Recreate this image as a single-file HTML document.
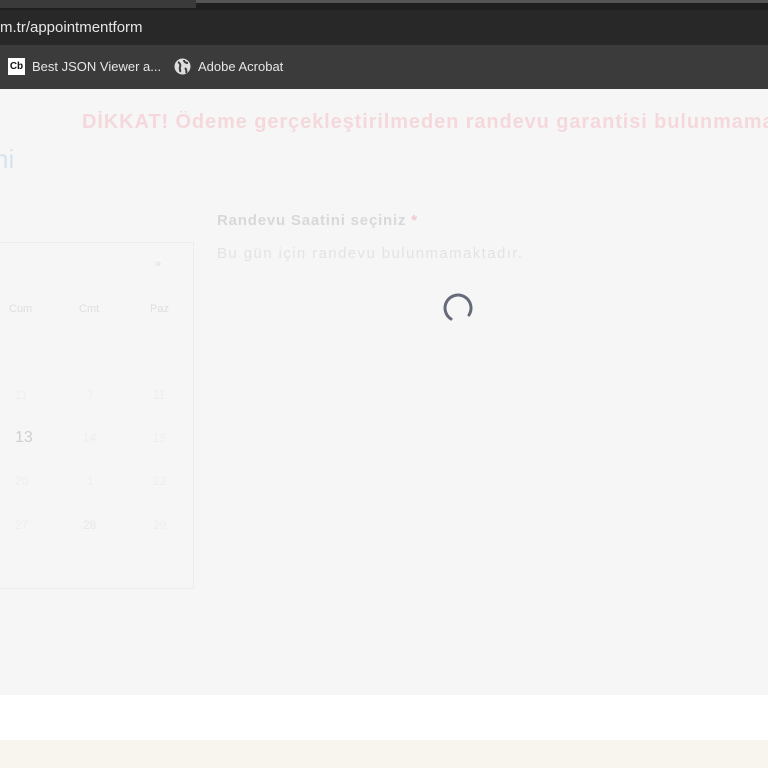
<!DOCTYPE html>
<html><head><meta charset="utf-8"><style>
body{margin:0;width:768px;height:768px;overflow:hidden;font-family:"Liberation Sans",sans-serif;background:#f6f6f6;position:relative}
div{position:absolute;box-sizing:border-box}
.t{white-space:nowrap}
</style></head><body>
<div style="left:0;top:0;width:768px;height:10px;background:#1f1f1f"></div>
<div style="left:0;top:0;width:196px;height:8px;background:#3a3a3a"></div>
<div style="left:196px;top:0;width:572px;height:3px;background:#555"></div>
<div style="left:0;top:10px;width:768px;height:35px;background:#282828"></div>
<div class="t" style="left:0;top:19px;font-size:15px;color:#e6e6e6">m.tr/appointmentform</div>
<div style="left:0;top:45px;width:768px;height:44px;background:#3b3b3b"></div>
<div style="left:8px;top:58px;width:17px;height:17px;background:#fff;color:#111;font-size:10px;font-weight:bold;line-height:17px;text-align:center">Cb</div>
<div class="t" style="left:32px;top:59px;font-size:13px;color:#e6e6e6">Best JSON Viewer a...</div>
<svg style="position:absolute;left:174px;top:58px" width="17" height="17" viewBox="0 0 17 17"><circle cx="8.5" cy="8.5" r="8" fill="#ddd"/><path d="M4 4c2 1 3 3 2 5s1 3 0 5M10 2c0 2 2 3 4 3M11 10c1 1 2 3 1 5" stroke="#3b3b3b" stroke-width="2" fill="none"/></svg>
<div class="t" style="left:198px;top:59px;font-size:13px;color:#e6e6e6">Adobe Acrobat</div>
<div class="t" style="left:82px;top:111px;width:686px;overflow:hidden;font-size:20px;color:#f5d8dc;font-weight:bold;letter-spacing:0.9px">DİKKAT! Ödeme gerçekleştirilmeden randevu garantisi bulunmama</div>
<div class="t" style="left:0;top:144px;width:20px;overflow:hidden;font-size:26px;color:#d6e3ef"><span style="margin-left:-6px">ni</span></div>
<div style="left:0;top:242px;width:194px;height:347px;border-top:1px solid #ececec;border-right:1px solid #ececec;border-bottom:1px solid #ececec"></div>
<div class="t" style="left:155px;top:258px;font-size:11px;color:#ddd">»</div>
<div class="t" style="left:9px;top:303px;font-size:11px;color:#dedede">Cum</div>
<div class="t" style="left:79px;top:303px;font-size:11px;color:#dedede">Cmt</div>
<div class="t" style="left:150px;top:303px;font-size:11px;color:#dedede">Paz</div>
<div class="t" style="left:15px;top:388px;font-size:12px;color:#eee">11</div>
<div class="t" style="left:87px;top:388px;font-size:12px;color:#eee">7</div>
<div class="t" style="left:153px;top:388px;font-size:12px;color:#eee">11</div>
<div class="t" style="left:15px;top:429px;font-size:16px;color:#cfcfcf">13</div>
<div class="t" style="left:83px;top:431px;font-size:12px;color:#eee">14</div>
<div class="t" style="left:153px;top:431px;font-size:12px;color:#eee">15</div>
<div class="t" style="left:15px;top:474px;font-size:12px;color:#eee">20</div>
<div class="t" style="left:87px;top:474px;font-size:12px;color:#eee">1</div>
<div class="t" style="left:153px;top:474px;font-size:12px;color:#eee">22</div>
<div class="t" style="left:15px;top:518px;font-size:12px;color:#eee">27</div>
<div class="t" style="left:83px;top:518px;font-size:12px;color:#e8e8e8">28</div>
<div class="t" style="left:153px;top:518px;font-size:12px;color:#eee">29</div>
<div class="t" style="left:217px;top:212px;font-size:15px;font-weight:bold;color:#d8d8d8;letter-spacing:0.8px">Randevu Saatini seçiniz <span style="color:#f3c5cc">*</span></div>
<div class="t" style="left:217px;top:245px;font-size:15px;color:#e3e3e3;letter-spacing:1.4px">Bu gün için randevu bulunmamaktadır.</div>
<svg style="position:absolute;left:441px;top:291px" width="34" height="34" viewBox="0 0 34 34"><path d="M10 28A13 13 0 1 1 28 24" stroke="#666a78" stroke-width="3" fill="none" stroke-linecap="round"/></svg>
<div style="left:0;top:695px;width:768px;height:45px;background:#fff"></div>
<div style="left:0;top:740px;width:768px;height:28px;background:#f8f4ee"></div>
</body></html>
